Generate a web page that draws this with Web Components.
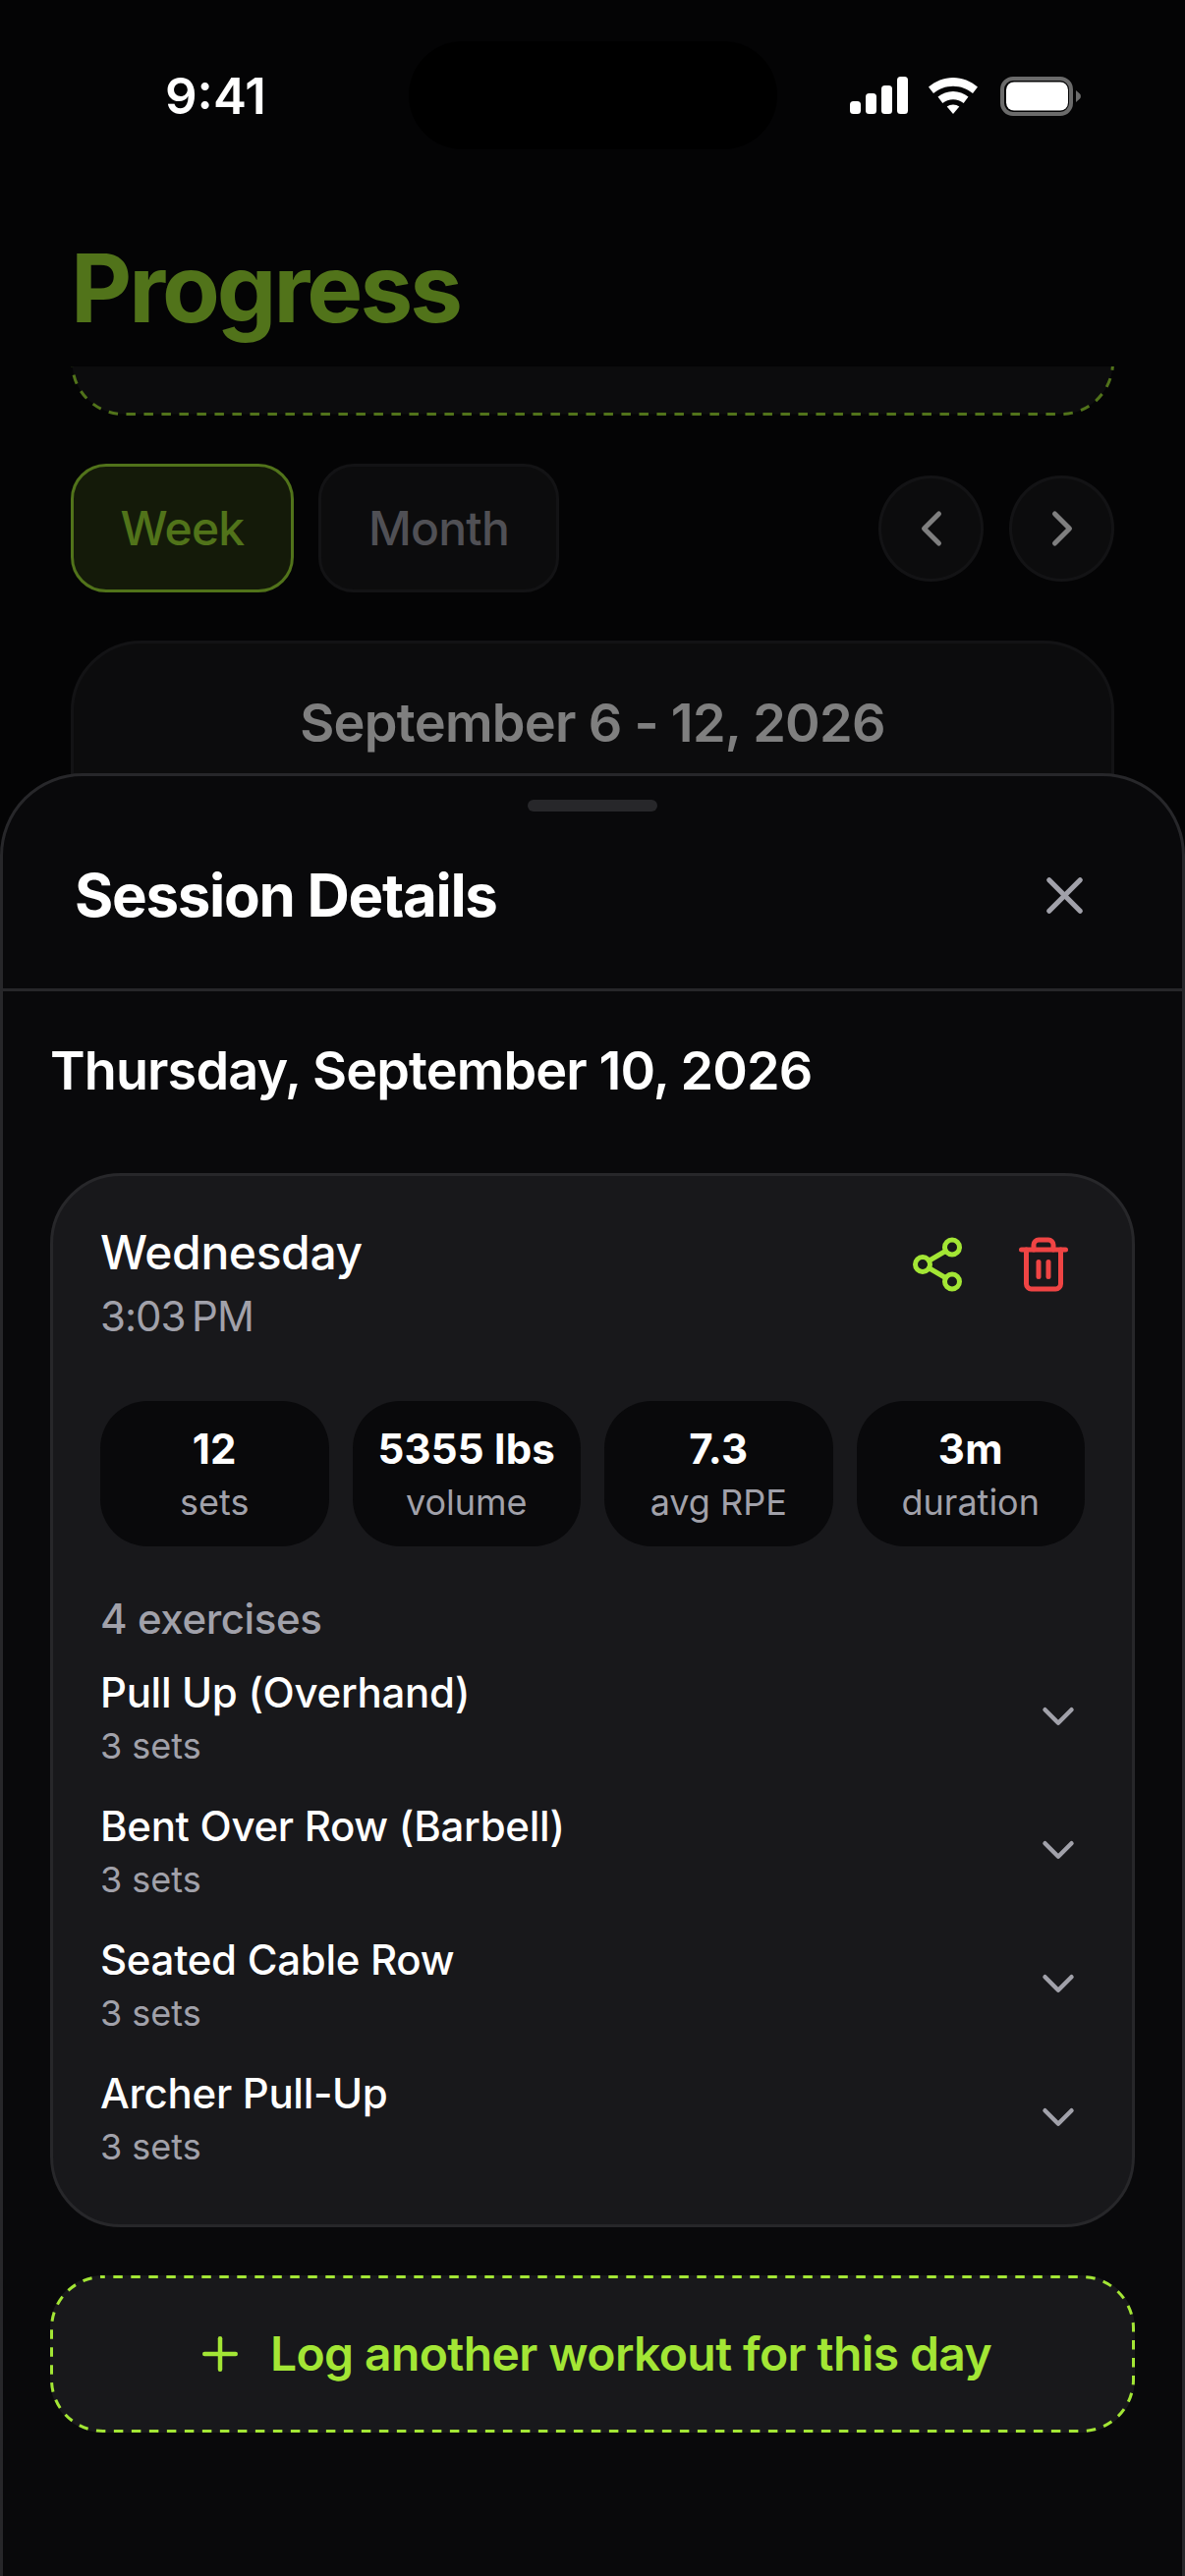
<!doctype html>
<html>
<head>
<meta charset="utf-8">
<style>
  html, body { margin: 0; background: #000; }
  body { width: 1206px; height: 2622px; overflow: hidden; font-family: Inter, "Noto Sans", sans-serif; }
  #app { position: relative; display: block; width: 1206px; height: 2622px; overflow: hidden; background: #09090b; }
</style>
</head>
<body>
<div id="app">
  <progress-screen></progress-screen>
  <sheet-backdrop></sheet-backdrop>
  <session-sheet heading="Session Details" date="Thursday, September 10, 2026">
    <session-card day="Wednesday" time="3:03&#8239;PM">
      <stat-chip slot="stats" value="12" label="sets"></stat-chip>
      <stat-chip slot="stats" value="5355 lbs" label="volume"></stat-chip>
      <stat-chip slot="stats" value="7.3" label="avg RPE"></stat-chip>
      <stat-chip slot="stats" value="3m" label="duration"></stat-chip>
      <exercise-row name="Pull Up (Overhand)" sets="3 sets"></exercise-row>
      <exercise-row name="Bent Over Row (Barbell)" sets="3 sets"></exercise-row>
      <exercise-row name="Seated Cable Row" sets="3 sets"></exercise-row>
      <exercise-row name="Archer Pull-Up" sets="3 sets"></exercise-row>
    </session-card>
    <log-button>Log another workout for this day</log-button>
  </session-sheet>
  <status-bar></status-bar>
</div>
<script>
  const define = (name, render) => {
    customElements.define(
      name,
      class extends HTMLElement {
        constructor() {
          super();
          this.attachShadow({ mode: 'open' });
        }
        connectedCallback() {
          this.shadowRoot.innerHTML = render(this);
        }
      }
    );
  };
  const attr = (el, name) => el.getAttribute(name) || '';

  define('status-bar', () => `
    <style>
      :host { position: absolute; top: 0; left: 0; width: 1206px; height: 156px; display: block; color: #fff; }
      .time { position: absolute; left: 168px; top: 68px; font: 600 51px/60px Inter, sans-serif; }
      .island { position: absolute; left: 416px; top: 42px; width: 375px; height: 110px; border-radius: 55px; background: #000; }
      .icons { position: absolute; left: 864px; top: 78px; display: flex; align-items: flex-start; gap: 20px; }
      svg { display: block; }
      .battery { margin-left: 2px; }
    </style>
    <span class="time">9:41</span>
    <div class="island"></div>
    <div class="icons">
      <svg width="60" height="38" viewBox="0 0 60 38" fill="#fff">
        <rect x="1" y="25" width="11" height="13" rx="3.5"/>
        <rect x="17" y="17" width="11" height="21" rx="3.5"/>
        <rect x="33" y="9" width="11" height="29" rx="3.5"/>
        <rect x="49" y="0" width="11" height="38" rx="3.5"/>
      </svg>
      <svg width="52" height="38" viewBox="0 0 52 38" fill="#fff">
        <path d="M26 1c9.500 0 18 3.600 25 9.500L46 17c-5.500-4.500-12.300-7.300-20-7.300S11.500 12.500 6 17L1 10.500C8 4.600 16.500 1 26 1z"/>
        <path d="M26 15c5.800 0 11 2.100 15.500 5.600L36.700 27c-3-2.300-6.700-3.800-10.700-3.800S18.300 24.700 15.300 27l-4.800-6.400C15 17.100 20.200 15 26 15z"/>
        <path d="M26 28.500c2.400 0 4.500.8 6.300 2.100L26 38l-6.300-7.400c1.800-1.300 3.900-2.100 6.300-2.100z"/>
      </svg>
      <svg class="battery" width="82" height="40" viewBox="0 0 82 40">
        <rect x="2" y="2" width="70" height="36" rx="11" fill="none" stroke="#6b6b6b" stroke-width="4"/>
        <rect x="6" y="5.500" width="63" height="29" rx="8" fill="#fff"/>
        <path d="M77 14l4 3.500c.6.500.9 1.200.9 2.500s-.3 2-.9 2.500L77 26z" fill="#6b6b6b"/>
      </svg>
    </div>
  `);

  define('progress-screen', () => `
    <style>
      :host { display: block; width: 1206px; height: 2622px; background: #09090b; }
      header { height: 373px; box-sizing: border-box; padding: 243px 72px 0; background: #09090b; }
      h1 { margin: 0; font: 700 96px/100px Inter, sans-serif; letter-spacing: -3px; color: #a3e635; }
      .scroll { padding: 0 72px; }
      .cta { height: 50px; overflow: hidden; }
      .cta svg { display: block; margin-top: -150px; }
      .bar { margin-top: 49px; display: flex; align-items: center; gap: 25px; }
      .tab { width: 227px; height: 131px; box-sizing: border-box; display: flex; align-items: center; justify-content: center; border: 3px solid #27272a; border-radius: 36px; background: #18181b; color: #a1a1aa; font: 500 48px/60px Inter, sans-serif; letter-spacing: -.8px; }
      .tab.on { border-color: #a3e635; background: rgba(163,230,53,.2); color: #a3e635; }
      .tab.month { width: 245px; }
      .nav { display: flex; gap: 26px; margin-left: auto; }
      .round { width: 107px; height: 108px; box-sizing: border-box; display: flex; align-items: center; justify-content: center; border: 3px solid #27272a; border-radius: 50%; background: #18181b; color: #fff; }
      .range { margin-top: 49px; height: 400px; box-sizing: border-box; padding-top: 48px; border: 3px solid #27272a; border-radius: 72px; background: #18181b; color: #fff; text-align: center; font: 600 54px/66px Inter, sans-serif; letter-spacing: -.7px; }
    </style>
    <header><h1>Progress</h1></header>
    <div class="scroll">
      <div class="cta">
        <svg width="1062" height="200" viewBox="0 0 1062 200"><path d="M1.500 0V146A52.500 52.500 0 0 0 54 198.500H1008A52.500 52.500 0 0 0 1060.500 146V0" fill="#18181b" stroke="#a3e635" stroke-width="3" stroke-dasharray="9.500 8.500" stroke-dashoffset="3.230"/></svg>
      </div>
      <div class="bar">
        <div class="tab on">Week</div>
        <div class="tab month">Month</div>
        <div class="nav">
          <div class="round"><svg width="60" height="60" viewBox="0 0 24 24" fill="none" stroke="currentColor" stroke-width="2" stroke-linecap="round" stroke-linejoin="round"><path d="m15 18-6-6 6-6"/></svg></div>
          <div class="round"><svg width="60" height="60" viewBox="0 0 24 24" fill="none" stroke="currentColor" stroke-width="2" stroke-linecap="round" stroke-linejoin="round"><path d="m9 18 6-6-6-6"/></svg></div>
        </div>
      </div>
      <div class="range">September 6 - 12, 2026</div>
    </div>
  `);

  define('sheet-backdrop', () => `
    <style>
      :host { position: absolute; inset: 0; display: block; background: rgba(0,0,0,.5); }
    </style>
  `);

  define('session-sheet', (el) => `
    <style>
      :host { position: absolute; left: 0; top: 787px; width: 1206px; height: 1900px; box-sizing: border-box; display: block; background: #09090b; border: 3px solid #27272a; border-radius: 84px 84px 0 0; color: #fff; }
      .handle { width: 132px; height: 12px; margin: 24px auto 0; border-radius: 6px; background: #27272a; }
      .head { display: flex; align-items: center; justify-content: space-between; box-sizing: border-box; height: 183px; padding: 0 91px 10px 76px; border-bottom: 3px solid #27272a; margin: 0 -3px; }
      h2 { margin: 0; font: 700 60px/72px Inter, sans-serif; letter-spacing: -1.3px; }
      .close { display: block; color: #a1a1aa; }
      .body { padding: 48px 48px 0; }
      h3 { margin: 0 0 71px; font: 600 54px/66px Inter, sans-serif; letter-spacing: -.9px; }
      ::slotted(session-card) { margin-bottom: 49px; }
    </style>
    <div class="handle"></div>
    <div class="head">
      <h2>${attr(el, 'heading')}</h2>
      <svg class="close" width="63" height="63" viewBox="0 0 24 24" fill="none" stroke="currentColor" stroke-width="2" stroke-linecap="round" stroke-linejoin="round"><path d="M18 6 6 18"/><path d="m6 6 12 12"/></svg>
    </div>
    <div class="body">
      <h3>${attr(el, 'date')}</h3>
      <slot></slot>
    </div>
  `);

  define('session-card', (el) => `
    <style>
      :host { display: block; box-sizing: border-box; border: 3px solid #27272a; border-radius: 72px; background: #18181b; padding: 48px 48px 42px; }
      .top { display: flex; justify-content: space-between; align-items: flex-start; margin-bottom: 59px; }
      .day { font: 500 48px/60px Inter, sans-serif; letter-spacing: -.4px; }
      .time { margin-top: 8px; font: 400 42px/54px Inter, sans-serif; letter-spacing: -1px; color: #a1a1aa; }
      .actions { display: flex; gap: 48px; margin: 12px 12px 0 0; }
      svg { display: block; }
      .stats { display: grid; grid-template-columns: repeat(4, 1fr); gap: 24px; margin-bottom: 47px; }
      .count { font: 500 42px/54px Inter, sans-serif; letter-spacing: -.4px; color: #a1a1aa; margin-bottom: 3px; }
    </style>
    <div class="top">
      <div>
        <div class="day">${attr(el, 'day')}</div>
        <div class="time">${attr(el, 'time')}</div>
      </div>
      <div class="actions">
        <svg width="60" height="60" viewBox="0 0 24 24" fill="none" stroke="#a3e635" stroke-width="2" stroke-linecap="round" stroke-linejoin="round"><circle cx="18" cy="5" r="3"/><circle cx="6" cy="12" r="3"/><circle cx="18" cy="19" r="3"/><line x1="8.590" y1="13.510" x2="15.420" y2="17.490"/><line x1="15.410" y1="6.510" x2="8.590" y2="10.490"/></svg>
        <svg width="60" height="60" viewBox="0 0 24 24" fill="none" stroke="#ef4444" stroke-width="2" stroke-linecap="round" stroke-linejoin="round"><path d="M3 6h18"/><path d="M19 6v14c0 1-1 2-2 2H7c-1 0-2-1-2-2V6"/><path d="M8 6V4c0-1 1-2 2-2h4c1 0 2 1 2 2v2"/><line x1="10" y1="11" x2="10" y2="17"/><line x1="14" y1="11" x2="14" y2="17"/></svg>
      </div>
    </div>
    <div class="stats"><slot name="stats"></slot></div>
    <div class="count">4 exercises</div>
    <slot></slot>
  `);

  define('stat-chip', (el) => `
    <style>
      :host { display: flex; flex-direction: column; align-items: center; height: 148px; box-sizing: border-box; padding-top: 22px; border-radius: 48px; background: #09090b; white-space: nowrap; }
      .value { font: 700 42px/54px Inter, sans-serif; letter-spacing: .2px; color: #fff; }
      .label { font: 400 36px/48px Inter, sans-serif; color: #a1a1aa; margin-top: 3px; }
    </style>
    <div class="value">${attr(el, 'value')}</div>
    <div class="label">${attr(el, 'label')}</div>
  `);

  define('exercise-row', (el) => `
    <style>
      :host { display: flex; align-items: center; justify-content: space-between; height: 136px; box-sizing: border-box; padding-top: 2px; }
      .name { font: 500 42px/54px Inter, sans-serif; letter-spacing: -.3px; color: #fff; }
      .sets { font: 400 36px/44px Inter, sans-serif; color: #a1a1aa; margin-top: 5px; }
      svg { display: block; color: #a1a1aa; }
    </style>
    <div>
      <div class="name">${attr(el, 'name')}</div>
      <div class="sets">${attr(el, 'sets')}</div>
    </div>
    <svg width="54" height="54" viewBox="0 0 24 24" fill="none" stroke="currentColor" stroke-width="2" stroke-linecap="round" stroke-linejoin="round"><path d="m6 9 6 6 6-6"/></svg>
  `);

  define('log-button', () => `
    <style>
      :host { position: relative; display: flex; align-items: center; justify-content: center; gap: 24px; height: 160px; box-sizing: border-box; border-radius: 54px; background: #18181b; color: #a3e635; font: 600 48px/60px Inter, sans-serif; letter-spacing: -.6px; }
      svg { display: block; }
      .edge { position: absolute; left: 0; top: 0; }
    </style>
    <svg class="edge" width="1104" height="160" viewBox="0 0 1104 160"><rect x="1.500" y="1.500" width="1101" height="157" rx="52.500" fill="none" stroke="currentColor" stroke-width="3" stroke-dasharray="9.500 8.500" stroke-dashoffset="7.700"/></svg>
    <svg width="54" height="54" viewBox="0 0 24 24" fill="none" stroke="currentColor" stroke-width="2" stroke-linecap="round" stroke-linejoin="round"><path d="M5 12h14"/><path d="M12 5v14"/></svg>
    <slot></slot>
  `);
</script>
</body>
</html>
